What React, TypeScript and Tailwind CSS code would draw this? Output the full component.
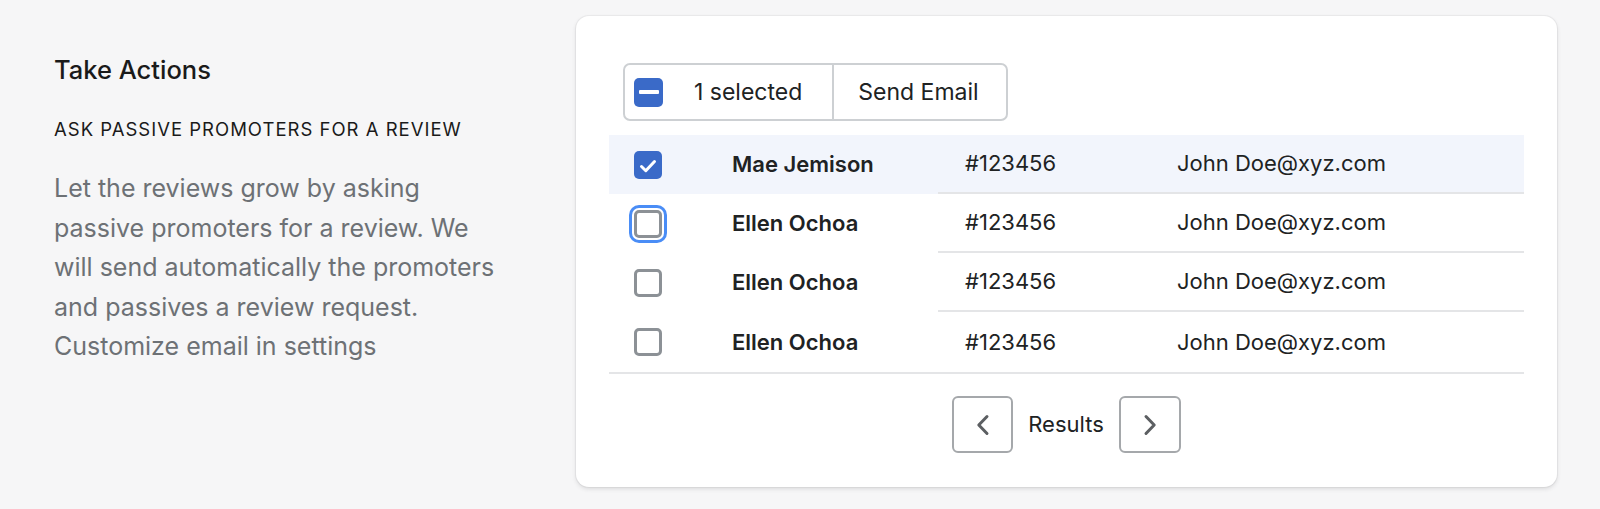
import React from 'react'

type CheckState = 'checked' | 'unchecked' | 'indeterminate'

const rows = [
  { name: 'Mae Jemison', id: '#123456', email: 'John Doe@xyz.com', selected: true, focused: false },
  { name: 'Ellen Ochoa', id: '#123456', email: 'John Doe@xyz.com', selected: false, focused: true },
  { name: 'Ellen Ochoa', id: '#123456', email: 'John Doe@xyz.com', selected: false, focused: false },
  { name: 'Ellen Ochoa', id: '#123456', email: 'John Doe@xyz.com', selected: false, focused: false },
]

function Checkbox({ state, focused = false }: { state: CheckState; focused?: boolean }) {
  if (state === 'checked') {
    return (
      <span className="flex h-[28px] w-[28px] shrink-0 items-center justify-center rounded-[5px] bg-[#3a6ac8]">
        <svg width="28" height="28" viewBox="0 0 28 28" fill="none">
          <path d="M7.5 15.5l4.3 4.2 8.7-9.2" stroke="#fff" strokeWidth="3" strokeLinecap="round" strokeLinejoin="round" />
        </svg>
      </span>
    )
  }
  if (state === 'indeterminate') {
    return (
      <span className="flex h-[29px] w-[29px] shrink-0 items-center justify-center rounded-[5px] bg-[#3a6ac8]">
        <span className="h-[4px] w-[20px] rounded-[1px] bg-white" />
      </span>
    )
  }
  return (
    <span
      className={
        'block h-[28px] w-[28px] shrink-0 rounded-[5px] border-[3px] border-[#8c9196] bg-white' +
        (focused ? ' ring-[3px] ring-[#4a8df6] ring-offset-[2px] ring-offset-white' : '')
      }
    />
  )
}

function Chevron({ dir }: { dir: 'left' | 'right' }) {
  return (
    <svg width="14" height="22" viewBox="0 0 14 22" fill="none">
      <path
        d={dir === 'left' ? 'M11 2.5L2.8 11l8.2 8.5' : 'M3 2.5l8.2 8.5L3 19.5'}
        stroke="#5c5f62"
        strokeWidth="3"
        strokeLinecap="round"
        strokeLinejoin="round"
      />
    </svg>
  )
}

export default function App() {
  return (
    <div className="flex min-h-screen bg-[#f6f6f7] pl-[54px] pt-[16px] font-['Inter','Liberation_Sans',sans-serif] text-[#202223]">
      {/* left description */}
      <div className="w-[450px] shrink-0 pt-[37.5px]">
        <h2 className="text-[25.5px] leading-[32px] font-medium text-[#1a1a1a]">Take Actions</h2>
        <h3 className="mt-[31px] text-[18.5px] leading-[24px] tracking-[1px] text-[#1a1a1a]">
          ASK PASSIVE PROMOTERS FOR A REVIEW
        </h3>
        <p className="mt-[28.5px] text-[25px] leading-[39.5px] text-[#6d7175]">
          Let the reviews grow by asking passive promoters for a review. We will send automatically the
          promoters and passives a review request. Customize email in settings
        </p>
      </div>

      {/* card */}
      <div className="ml-[72px] h-[471px] w-[981px] shrink-0 rounded-[13px] bg-white px-[33px] pt-[47px] shadow-[0_0_0_1px_rgba(63,63,68,0.05),0_2px_4px_rgba(63,63,68,0.15)]">
        <div className="ml-[14px] inline-flex h-[58px] items-stretch rounded-[7px] border-2 border-[#cdd0d3]">
          <div className="flex items-center pl-[9px] pr-[30px]">
            <Checkbox state="indeterminate" />
            <span className="ml-[31px] text-[23px]">1 selected</span>
          </div>
          <div className="w-[2px] bg-[#cdd0d3]" />
          <div className="flex items-center pl-[24px] pr-[27px] text-[23px]">Send Email</div>
        </div>

        <div className="mt-[14px]">
          {rows.map((r, i) => {
            const last = i === rows.length - 1
            return (
              <div
                key={i}
                className={
                  'flex text-[22px]' +
                  (r.selected ? ' bg-[#f2f5fc]' : '') +
                  (last ? ' h-[62px] border-b-2 border-[#e4e5e7]' : ' h-[59px]')
                }
              >
                <div className="flex w-[329px] shrink-0 items-center pl-[25px]">
                  <Checkbox state={r.selected ? 'checked' : 'unchecked'} focused={r.focused} />
                  <span className="ml-[70px] font-semibold">{r.name}</span>
                </div>
                <div className={'flex flex-1 items-center' + (last ? '' : ' border-b-2 border-[#e4e5e7]')}>
                  <span className="w-[239px] pl-[27px]">{r.id}</span>
                  <span>{r.email}</span>
                </div>
              </div>
            )
          })}
        </div>

        <div className="mt-[22px] flex items-center justify-center gap-[15px]">
          <button className="flex h-[57px] w-[61px] items-center justify-center rounded-[6px] border-2 border-[#a5a8ab] bg-white">
            <Chevron dir="left" />
          </button>
          <span className="text-[22px]">Results</span>
          <button className="flex h-[57px] w-[62px] items-center justify-center rounded-[6px] border-2 border-[#a5a8ab] bg-white">
            <Chevron dir="right" />
          </button>
        </div>
      </div>
    </div>
  )
}
